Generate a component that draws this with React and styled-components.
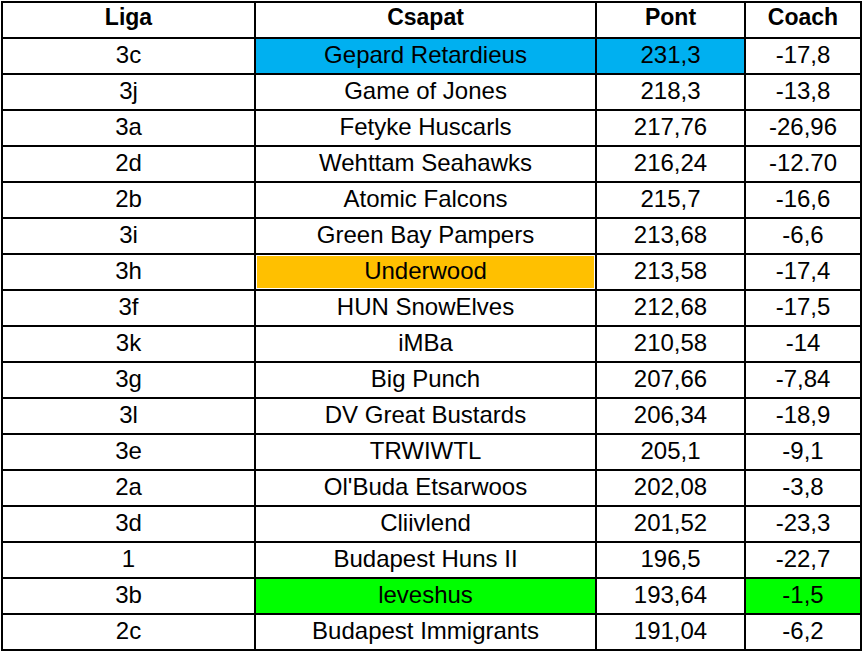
import React from "react";
import styled, { createGlobalStyle } from "styled-components";

const Global = createGlobalStyle`
  html, body { margin: 0; padding: 0; background: #fff; }
  body { font-family: "Liberation Sans", Arial, sans-serif; }
`;

const Grid = styled.div`
  display: grid;
  grid-template-columns: 251px 339px 147px 114px;
  grid-auto-rows: 34px;
  gap: 2px;
  padding: 2px;
  background: #000;
  width: fit-content;
  margin: 1px 0 0 1px;
`;

const HeadCell = styled.div`
  background: #fff;
  display: flex;
  align-items: center;
  justify-content: center;
  font-weight: 700;
  font-size: 23px;
  line-height: 1;
  color: #000;
  padding-bottom: 6px;
  box-sizing: border-box;
`;

const Cell = styled.div`
  background: ${(p) => p.$bg || "#fff"};
  box-shadow: ${(p) => (p.$inset ? "inset 0 0 0 1px #fff" : "none")};
  display: flex;
  align-items: center;
  justify-content: center;
  font-size: 24px;
  line-height: 1;
  color: #000;
  padding-bottom: 3px;
  box-sizing: border-box;
  white-space: nowrap;
`;

const BLUE = "#00B0F0";
const ORANGE = "#FFC000";
const GREEN = "#00FF00";

const rows = [
  ["3c", "Gepard Retardieus", "231,3", "-17,8", { team: BLUE, pont: BLUE }],
  ["3j", "Game of Jones", "218,3", "-13,8"],
  ["3a", "Fetyke Huscarls", "217,76", "-26,96"],
  ["2d", "Wehttam Seahawks", "216,24", "-12.70"],
  ["2b", "Atomic Falcons", "215,7", "-16,6"],
  ["3i", "Green Bay Pampers", "213,68", "-6,6"],
  ["3h", "Underwood", "213,58", "-17,4", { team: ORANGE, inset: true }],
  ["3f", "HUN SnowElves", "212,68", "-17,5"],
  ["3k", "iMBa", "210,58", "-14"],
  ["3g", "Big Punch", "207,66", "-7,84"],
  ["3l", "DV Great Bustards", "206,34", "-18,9"],
  ["3e", "TRWIWTL", "205,1", "-9,1"],
  ["2a", "Ol'Buda Etsarwoos", "202,08", "-3,8"],
  ["3d", "Cliivlend", "201,52", "-23,3"],
  ["1", "Budapest Huns II", "196,5", "-22,7"],
  ["3b", "leveshus", "193,64", "-1,5", { team: GREEN, coach: GREEN }],
  ["2c", "Budapest Immigrants", "191,04", "-6,2"],
];

export default function App() {
  return (
    <>
      <Global />
      <Grid>
        <HeadCell>Liga</HeadCell>
        <HeadCell>Csapat</HeadCell>
        <HeadCell>Pont</HeadCell>
        <HeadCell>Coach</HeadCell>
        {rows.map(([liga, team, pont, coach, c = {}], i) => (
          <React.Fragment key={i}>
            <Cell>{liga}</Cell>
            <Cell $bg={c.team} $inset={c.inset}>{team}</Cell>
            <Cell $bg={c.pont}>{pont}</Cell>
            <Cell $bg={c.coach}>{coach}</Cell>
          </React.Fragment>
        ))}
      </Grid>
    </>
  );
}
